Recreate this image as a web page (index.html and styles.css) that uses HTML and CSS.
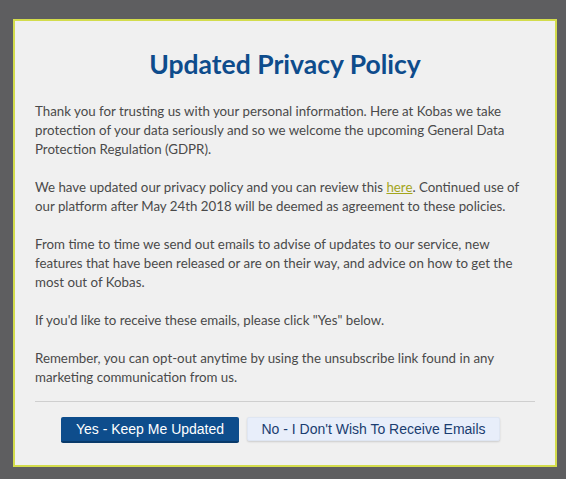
FILE: index.html
```html
<!DOCTYPE html>
<html>
<head>
<meta charset="utf-8">
<link rel="stylesheet" href="styles.css">
</head>
<body>
<div class="modal">
  <h1 class="title">Updated Privacy Policy</h1>
  <p>Thank you for trusting us with your personal information. Here at Kobas we take protection of your data seriously and so we welcome the upcoming General Data Protection Regulation (GDPR).</p>
  <p>We have updated our privacy policy and you can review this <a href="#">here</a>. Continued use of our platform after May 24th 2018 will be deemed as agreement to these policies.</p>
  <p>From time to time we send out emails to advise of updates to our service, new features that have been released or are on their way, and advice on how to get the most out of Kobas.</p>
  <p>If you'd like to receive these emails, please click "Yes" below.</p>
  <p class="last">Remember, you can opt-out anytime by using the unsubscribe link found in any marketing communication from us.</p>
  <div class="divider"></div>
  <div class="actions">
    <button class="btn btn-yes">Yes - Keep Me Updated</button>
    <button class="btn btn-no">No - I Don't Wish To Receive Emails</button>
  </div>
</div>
</body>
</html>
```
FILE: styles.css
```css
html, body {
  margin: 0;
  padding: 0;
  background: #5e5e60;
}
body {
  padding: 19px 0 0 13px;
  height: 479px;
  box-sizing: border-box;
}
.modal {
  width: 544px;
  height: 448px;
  box-sizing: border-box;
  background: #f0f0f0;
  border: 2px solid #d3dc4c;
  padding: 26px 20px 0 20px;
  font-family: "Lato", "Noto Sans", sans-serif;
  font-size: 13.3px;
  line-height: 19px;
  color: #4a4a4a;
}
.title {
  margin: 0 0 21px;
  text-align: center;
  font-size: 26.5px;
  line-height: 34px;
  font-weight: 700;
  color: #0e4c8c;
}
p {
  margin: 0 0 19px;
}
p.last {
  margin-bottom: 14px;
}
a {
  color: #a3a51c;
  text-decoration: underline;
}
.divider {
  height: 1px;
  background: #cfcfcf;
}
.actions {
  display: flex;
  justify-content: center;
  gap: 8px;
  margin-top: 15px;
  padding-right: 9px;
}
.btn {
  font-family: "Liberation Sans", Arial, sans-serif;
  font-size: 14px;
  height: 26px;
  padding: 0;
  border-radius: 2px;
  white-space: nowrap;
  cursor: pointer;
}
.btn-yes {
  width: 178px;
  background: #0e4d8c;
  color: #fff;
  border: none;
  border-bottom: 2px solid #093a6a;
}
.btn-no {
  width: 253px;
  height: 24px;
  background: #e8eefa;
  color: #1a3d70;
  border: 1px solid #dfe6f2;
  box-shadow: 0 1px 2px rgba(0,0,0,0.15);
}
```
